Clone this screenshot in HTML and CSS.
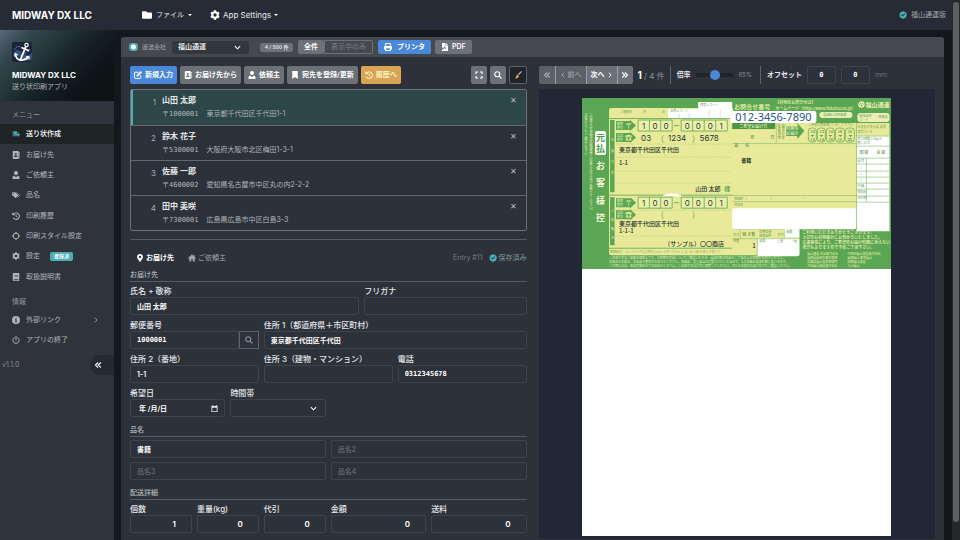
FILE: index.html
```html
<!DOCTYPE html>
<html lang="ja">
<head>
<meta charset="utf-8">
<meta name="viewport" content="width=device-width, initial-scale=1">
<title>MIDWAY DX LLC</title>
<link rel="stylesheet" href="styles.css">
</head>
<body>
<svg class="sprite" aria-hidden="true">
  <symbol id="folder" viewBox="0 0 512 512"><path d="M464 128H272l-64-64H48C21.5 64 0 85.500 0 112v288c0 26.500 21.500 48 48 48h416c26.500 0 48-21.500 48-48V176c0-26.500-21.500-48-48-48z"/></symbol>
  <symbol id="gear" viewBox="0 0 16 16"><path fill-rule="evenodd" d="M6.300.5h3.400l.5 2 1.400.8 2-.6 1.700 2.900-1.500 1.500v1.800l1.500 1.500-1.700 2.900-2-.6-1.400.8-.5 2H6.300l-.5-2-1.400-.8-2 .6L.7 10.400l1.500-1.500V7.100L.7 5.600l1.700-2.900 2 .6 1.400-.8zM8 5.300a2.700 2.700 0 1 0 0 5.400 2.700 2.700 0 0 0 0-5.400z"/></symbol>
  <symbol id="check" viewBox="0 0 16 16"><path fill-rule="evenodd" d="M8 0l2 1.500 2.500-.1.900 2.300 2.100 1.400L15 7.600l.8 2.400-2 1.600-.6 2.400-2.500.2L8.600 16 6.500 14.700 4 14.600l-.9-2.300L1 10.900l.5-2.500L.5 6l2-1.600L3 2l2.600-.2zM12.300 5.800l-1.200-1.200-4 4-1.800-1.800-1.200 1.200 3 3z"/></symbol>
  <symbol id="truck" viewBox="0 0 20 16"><path fill-rule="evenodd" d="M3 1h9v2.500h3l4 4V12h-1.500a2.500 2.500 0 0 1-5 0h-4a2.500 2.500 0 0 1-5 0H2V9.500h5V8H0V6.500h6V5H1V3.500h2zM13 5v3h4.200l-3-3zM5 12a1 1 0 1 0 2 0 1 1 0 0 0-2 0zm9 0a1 1 0 1 0 2 0 1 1 0 0 0-2 0z"/></symbol>
  <symbol id="book" viewBox="0 0 16 16"><path fill-rule="evenodd" d="M3 0h9q1.500 0 1.500 1.500v13Q13.500 16 12 16H3q-1.500 0-1.500-1.500v-13Q1.500 0 3 0zm4.500 4a2 2 0 1 0 0 4 2 2 0 0 0 0-4zM4 12h7c0-2-1-3-2.500-3h-2C5 9 4 10 4 12z"/><path d="M14 2h1.500v3H14zM14 6.500h1.500v3H14zM14 11h1.500v3H14z"/></symbol>
  <symbol id="user" viewBox="0 0 16 16"><circle cx="8" cy="4" r="4"/><path d="M1 16v-3q0-3.500 3.500-4L8 12.500 11.500 9Q15 9.500 15 13v3z"/></symbol>
  <symbol id="tags" viewBox="0 0 20 16"><path fill-rule="evenodd" d="M0 2.500Q0 1 1.500 1H8l7 7q1 1 0 2l-5 5q-1 1-2 0L0 8zM3.500 3a1.500 1.500 0 1 0 0 3 1.500 1.500 0 0 0 0-3z"/><path d="M10 1h1.500L19 8q1 1 0 2l-5 5q-.8.800-1.600.4L17 10.500q1.200-1.500 0-2.800z"/></symbol>
  <symbol id="history" viewBox="0 0 16 16"><path d="M1 1l2 2a7.500 7.500 0 1 1-1 9.300l1.800-1.200A5.300 5.300 0 1 0 4.500 4.500L6.500 6.500H.5V1z"/><path d="M7.300 4.500H9v3.300l2.400 1.800-1 1.400-3.100-2.300z"/></symbol>
  <symbol id="target" viewBox="0 0 16 16"><path fill-rule="evenodd" d="M7 0h2v1.600A6.500 6.500 0 0 1 14.400 7H16v2h-1.600A6.500 6.500 0 0 1 9 14.400V16H7v-1.600A6.500 6.500 0 0 1 1.600 9H0V7h1.600A6.500 6.500 0 0 1 7 1.600zM8 3.500a4.500 4.500 0 1 0 0 9 4.500 4.500 0 0 0 0-9z"/></symbol>
  <symbol id="manual" viewBox="0 0 16 16"><path fill-rule="evenodd" d="M4 0h10.500v12l-1 .7V14.500h1V16H4q-2.500 0-2.500-2.500v-11Q1.500 0 4 0zm1 4v1.200h7V4zm0 2.500v1.200h7V6.500zM4.500 12.500q-1 0-1 1t1 1H12v-2z"/></symbol>
  <symbol id="info" viewBox="0 0 16 16"><path fill-rule="evenodd" d="M8 0a8 8 0 1 0 0 16A8 8 0 0 0 8 0zM7 3h2.200v2.200H7zM6 6.500h3.200V11h1v1.500H6V11h1V8H6z"/></symbol>
  <symbol id="power" viewBox="0 0 16 16"><path fill="none" stroke="currentColor" stroke-width="2" stroke-linecap="round" d="M8 1v7M4.300 3.200a6.300 6.300 0 1 0 7.400 0"/></symbol>
  <symbol id="chev" viewBox="0 0 16 16"><path fill="none" stroke="currentColor" stroke-width="2" d="M5 2l6 6-6 6"/></symbol>
  <symbol id="left" viewBox="0 0 16 16"><path fill="none" stroke="currentColor" stroke-width="2.500" d="M11 2L5 8l6 6"/></symbol>
  <symbol id="right" viewBox="0 0 16 16"><path fill="none" stroke="currentColor" stroke-width="2.500" d="M5 2l6 6-6 6"/></symbol>
  <symbol id="dleft" viewBox="0 0 16 16"><path fill="none" stroke="currentColor" stroke-width="2.200" d="M8 3L3 8l5 5M13.500 3l-5 5 5 5"/></symbol>
  <symbol id="dright" viewBox="0 0 16 16"><path fill="none" stroke="currentColor" stroke-width="2.200" d="M8 3l5 5-5 5M2.500 3l5 5-5 5"/></symbol>
  <symbol id="edit" viewBox="0 0 16 16"><path fill="none" stroke="currentColor" stroke-width="2" d="M9 2.500H2.500Q1 2.500 1 4v9.500Q1 15 2.500 15H12q1.500 0 1.500-1.500V9"/><path d="M13 0l3 3-7.500 7.500L5 11.500 5.500 8z"/></symbol>
  <symbol id="mark" viewBox="0 0 16 16"><path d="M2.500 0h11v16L8 12l-5.500 4z"/></symbol>
  <symbol id="printer" viewBox="0 0 16 16"><path fill-rule="evenodd" d="M3 0h9l1.500 1.500V6H15l1 1v6h-2.500v3h-11v-3H0V7l1-1h1.500V0zm1.500 2v4h7V2.500L11 2zm0 8.500V14h7v-3.500z"/></symbol>
  <symbol id="file" viewBox="0 0 16 16"><path fill-rule="evenodd" d="M2 0h7v5h5v11H2v-3l5-1v-2L2 9zm5 6l-2 6 6-1-2-2z"/><path d="M10 0l4 4h-4z"/></symbol>
  <symbol id="expand" viewBox="0 0 16 16"><path fill="none" stroke="currentColor" stroke-width="2.400" d="M2 6V2h4M10 2h4v4M14 10v4h-4M6 14H2v-4"/></symbol>
  <symbol id="search" viewBox="0 0 16 16"><path fill="none" stroke="currentColor" stroke-width="2.200" d="M11.500 6.500a5 5 0 1 1-10 0 5 5 0 0 1 10 0zM10 10l5 5"/></symbol>
  <symbol id="broom" viewBox="0 0 16 16"><path fill="#b9bdc1" d="M14.500 0L16 1.500l-6 6.500-2-2z"/><path fill="#d9a454" d="M6.500 6.500l3.500 3.500q-1 4-5 5l-3-.5q3-3 3-5.500z"/></symbol>
  <symbol id="pin" viewBox="0 0 16 16"><path fill-rule="evenodd" d="M8 0a5.800 5.800 0 0 0-5.800 5.800C2.200 9.500 5.500 12 8 16c2.500-4 5.800-6.500 5.800-10.200A5.800 5.800 0 0 0 8 0zm0 3.500a2.300 2.300 0 1 0 0 4.600 2.300 2.300 0 0 0 0-4.600z"/></symbol>
  <symbol id="home" viewBox="0 0 16 16"><path d="M8 .5L0 8l1.200 1.300L2.500 8.200V15H6.500v-4.500h3V15h4V8.200l1.300 1.100L16 8l-2.500-2.300V2h-2v1.800z"/></symbol>
  <symbol id="cal" viewBox="0 0 16 16"><path fill-rule="evenodd" d="M3 0h2v2h6V0h2v2h2v14H1V2h2zm0 6v8h10V6z"/></symbol>
</svg>

<header class="topbar">
  <a class="brand" href="#">MIDWAY DX LLC</a>
  <nav class="topnav">
    <button class="topnav-item"><svg class="icon icon-lg"><use href="#folder"/></svg>ファイル<span class="caret"></span></button>
    <button class="topnav-item"><svg class="icon icon-lg"><use href="#gear"/></svg>App Settings<span class="caret"></span></button>
  </nav>
  <div class="edition"><svg class="icon teal"><use href="#check"/></svg>福山通運版</div>
</header>

<div class="shell">
  <aside class="sidebar">
    <div class="identity">
      <svg class="logo" viewBox="0 0 20 20">
        <rect width="20" height="20" rx="2" fill="#1c2438"/>
        <path d="M1 11Q4 6 8 9T15 13T20 10V18Q14 20 9 16T1 15z" fill="#34507e"/>
        <path d="M2 8Q5 3 9 5M11 12q4-1 7-5" stroke="#4c6a98" fill="none"/>
        <g fill="none" stroke="#fff" stroke-linecap="round">
          <circle cx="14.500" cy="3" r="1.700" stroke-width="1.200"/>
          <path d="M13.700 4.800L8.500 17.500" stroke-width="1.800"/>
          <path d="M10 5.800l6.500 2.800" stroke-width="1.600"/>
          <path d="M3.500 12Q4 17.500 8.500 18T16.500 15" stroke-width="1.800"/>
          <path d="M2.800 14l.7-2.500 2.200 1.400M14.300 14.600l2.700-.2v2.600" stroke-width="1"/>
        </g>
      </svg>
      <strong>MIDWAY DX LLC</strong>
      <span>送り状印刷アプリ</span>
    </div>
    <h2 class="nav-title">メニュー</h2>
    <ul class="nav nav-main">
      <li><a class="active" href="#"><svg class="icon teal"><use href="#truck"/></svg>送り状作成</a></li>
      <li><a href="#"><svg class="icon"><use href="#book"/></svg>お届け先</a></li>
      <li><a href="#"><svg class="icon"><use href="#user"/></svg>ご依頼主</a></li>
      <li><a href="#"><svg class="icon"><use href="#tags"/></svg>品名</a></li>
      <li><a href="#"><svg class="icon"><use href="#history"/></svg>印刷履歴</a></li>
      <li><a href="#"><svg class="icon"><use href="#target"/></svg>印刷スタイル設定</a></li>
      <li><a href="#"><svg class="icon"><use href="#gear"/></svg>設定<span class="tag">登録済</span></a></li>
      <li><a href="#"><svg class="icon"><use href="#manual"/></svg>取扱説明書</a></li>
    </ul>
    <h2 class="nav-title nav-title-info">情報</h2>
    <ul class="nav">
      <li><a href="#"><svg class="icon"><use href="#info"/></svg>外部リンク<svg class="icon icon-sm more"><use href="#chev"/></svg></a></li>
      <li><a href="#"><svg class="icon"><use href="#power"/></svg>アプリの終了</a></li>
    </ul>
    <div class="side-foot"><span>v1.1.0</span><button class="collapse" aria-label="メニューを閉じる"><svg class="icon"><use href="#dleft"/></svg></button></div>
  </aside>

  <main class="panel">
    <div class="carrier-bar">
      <span class="status"></span>
      <label class="muted" for="carrier">運送会社</label>
      <select id="carrier" class="carrier"><option>福山通運</option></select>
      <span class="count">4 / 500 件</span>
      <div class="group filter"><button class="btn">全件</button><button class="btn btn-outline">表示中のみ</button></div>
      <button class="btn btn-blue btn-print"><svg class="icon"><use href="#printer"/></svg>プリンタ</button>
      <button class="btn"><svg class="icon"><use href="#file"/></svg>PDF</button>
    </div>

    <div class="columns">
      <section class="editor">
        <div class="actions">
          <button class="btn btn-blue"><svg class="icon"><use href="#edit"/></svg>新規入力</button>
          <button class="btn"><svg class="icon"><use href="#book"/></svg>お届け先から</button>
          <button class="btn"><svg class="icon"><use href="#user"/></svg>依頼主</button>
          <button class="btn"><svg class="icon"><use href="#mark"/></svg>宛先を登録/更新</button>
          <button class="btn btn-gold"><svg class="icon"><use href="#history"/></svg>履歴へ</button>
          <span class="spacer"></span>
          <button class="btn btn-icon" aria-label="拡大"><svg class="icon"><use href="#expand"/></svg></button>
          <button class="btn btn-icon" aria-label="検索"><svg class="icon"><use href="#search"/></svg></button>
          <button class="btn btn-icon btn-dark" aria-label="クリア"><svg class="icon"><use href="#broom"/></svg></button>
        </div>

        <ol class="entries">
          <li class="current"><span class="num">1</span><div><b>山田 太郎</b><p><span class="zip">〒1000001</span>東京都千代田区千代田1-1</p></div><button class="remove" aria-label="削除">✕</button></li>
          <li><span class="num">2</span><div><b>鈴木 花子</b><p><span class="zip">〒5300001</span>大阪府大阪市北区梅田1-3-1</p></div><button class="remove" aria-label="削除">✕</button></li>
          <li><span class="num">3</span><div><b>佐藤 一郎</b><p><span class="zip">〒4600002</span>愛知県名古屋市中区丸の内2-2-2</p></div><button class="remove" aria-label="削除">✕</button></li>
          <li><span class="num">4</span><div><b>田中 美咲</b><p><span class="zip">〒7300001</span>広島県広島市中区白島3-3</p></div><button class="remove" aria-label="削除">✕</button></li>
        </ol>

        <form class="form">
          <div class="tabs">
            <button type="button" class="tab tab-on"><svg class="icon"><use href="#pin"/></svg>お届け先</button>
            <button type="button" class="tab"><svg class="icon"><use href="#home"/></svg>ご依頼主</button>
            <span class="spacer"></span>
            <span class="entry-id">Entry #11</span>
            <span class="saved"><svg class="icon teal"><use href="#check"/></svg>保存済み</span>
          </div>

          <h3 class="section">お届け先</h3>
          <div class="fields">
            <div class="field c7"><label for="name">氏名 + 敬称</label><input id="name" value="山田 太郎"></div>
            <div class="field c5"><label for="kana">フリガナ</label><input id="kana"></div>
            <div class="field c4"><label for="zip">郵便番号</label><div class="addon"><input id="zip" class="mono" value="1000001"><button type="button" aria-label="住所検索"><svg class="icon"><use href="#search"/></svg></button></div></div>
            <div class="field c8"><label for="a1">住所 1（都道府県＋市区町村）</label><input id="a1" value="東京都千代田区千代田"></div>
            <div class="field c4"><label for="a2">住所 2（番地）</label><input id="a2" value="1-1"></div>
            <div class="field c4"><label for="a3">住所 3（建物・マンション）</label><input id="a3"></div>
            <div class="field c4"><label for="tel">電話</label><input id="tel" class="mono" value="0312345678"></div>
            <div class="field c3"><label for="date">希望日</label><div class="date"><input id="date" value="年 /月/日"><svg class="icon"><use href="#cal"/></svg></div></div>
            <div class="field c3"><label for="time">時間帯</label><select id="time"><option></option></select></div>
          </div>

          <h3 class="section section-next">品名</h3>
          <div class="fields">
            <input class="c6" aria-label="品名1" value="書籍">
            <input class="c6" aria-label="品名2" placeholder="品名2">
            <input class="c6" aria-label="品名3" placeholder="品名3">
            <input class="c6" aria-label="品名4" placeholder="品名4">
          </div>

          <h3 class="section section-next">配送詳細</h3>
          <div class="fields numbers">
            <div class="field c2"><label for="qty">個数</label><input id="qty" value="1"></div>
            <div class="field c2"><label for="kg">重量(kg)</label><input id="kg" value="0"></div>
            <div class="field c2"><label for="cod">代引</label><input id="cod" value="0"></div>
            <div class="field c3"><label for="sum">金額</label><input id="sum" value="0"></div>
            <div class="field c3"><label for="fee">送料</label><input id="fee" value="0"></div>
          </div>
        </form>
      </section>

      <section class="viewer">
        <div class="actions viewer-bar">
          <div class="group pager">
            <button class="btn dim" aria-label="最初"><svg class="icon"><use href="#dleft"/></svg></button>
            <button class="btn dim"><svg class="icon icon-sm"><use href="#left"/></svg>前へ</button>
            <button class="btn">次へ<svg class="icon icon-sm"><use href="#right"/></svg></button>
            <button class="btn" aria-label="最後"><svg class="icon"><use href="#dright"/></svg></button>
          </div>
          <span class="page"><b>1</b> / 4 件</span>
          <label class="ruled" for="zoom">倍率</label>
          <input id="zoom" class="zoom" type="range" min="30" max="100" value="65">
          <span class="percent">65%</span>
          <label class="ruled" for="ox">オフセット</label>
          <input id="ox" class="offset mono" value="0">
          <input class="offset mono" aria-label="縦オフセット" value="0">
          <span class="unit">mm</span>
        </div>
        <div class="stage">
          <div class="paper">
            <svg class="slip" viewBox="0 0 309 171">
              <defs>
                <g id="arrow"><path d="M0 1h14V0l6 5.500L14 11v-1H0z" fill="#5aa654"/></g>
                <g id="boxes" fill="#edefa9" stroke="#5aa654" stroke-width=".8"><path d="M0 0h34v11H0zM11.300 0v11M22.600 0v11M43 0h46v11H43zM54.500 0v11M66 0v11M77.500 0v11M36 5.500h5"/></g>
              </defs>
              <rect width="309" height="171" fill="#5aa654"/>

              <g class="slip-tiny white">
                <text class="upright" x="9" y="15">この控えはお荷物の追跡調査等に必要ですので大切に保管してください。</text>
                <text class="upright" x="4" y="15">お届けについてご確認ください</text>
              </g>
              <rect x="13" y="33" width="11" height="24" rx="2" fill="#fff"/>
              <g class="slip-side">
                <text x="18.500" y="43" class="green">元</text><text x="18.500" y="54" class="green">払</text>
                <text x="18.500" y="71">お</text><text x="18.500" y="88">客</text><text x="18.500" y="106">様</text><text x="18.500" y="123">控</text>
              </g>

              <rect x="27" y="10" width="124" height="147" rx="2" fill="#e8ea99"/>
              <path d="M86 11h30V4h34v17H86z" fill="#fff"/>
              <path d="M127 12v8M138 12v8M97 15v5M107 15v5" stroke="#a9cfa0" stroke-width=".5"/>
              <path d="M27 20.500h124M27 97h124M27 150h124" stroke="#5aa654" stroke-width=".8"/>
              <path d="M81 97q9-4 18 0v1H81z" fill="#fff"/>
              <path d="M34 59h115M34 73h115M34 85h115M34 46h115M34 112h115M34 138h115" stroke="#a8ca78" stroke-width=".5" stroke-dasharray="2 1"/>
              <path d="M28 22h4.500v72H28zM28 99h4.500v48H28z" fill="#5aa654"/>
              <g class="slip-tiny"><text x="38" y="15">ご依頼日</text><text x="61" y="15">月</text><text x="80" y="15">日</text><text x="88" y="14">出荷人コード</text><text x="118" y="8">荷受人コード</text></g>
              <g class="slip-tiny white">
                <text x="29" y="43">お</text><text x="29" y="54">届</text><text x="29" y="65">け</text><text x="29" y="76">先</text>
                <text x="29" y="114">ご</text><text x="29" y="123">依</text><text x="29" y="132">頼</text><text x="29" y="141">主</text>
              </g>
              <use href="#arrow" x="34" y="22"/><use href="#arrow" x="34" y="34"/><use href="#arrow" x="34" y="99"/><use href="#arrow" x="34" y="111"/>
              <g class="slip-tiny white">
                <text x="35" y="27">郵便</text><text x="35" y="31">番号</text><text x="35" y="39">電話</text><text x="35" y="43">番号</text>
                <text x="35" y="104">郵便</text><text x="35" y="108">番号</text><text x="35" y="116">電話</text><text x="35" y="120">番号</text>
              </g>
              <g class="slip-mark"><text x="43" y="30">〒</text><text x="43" y="42">☎</text><text x="43" y="107">〒</text><text x="43" y="119">☎</text></g>
              <use href="#boxes" x="56" y="22"/><use href="#boxes" x="56" y="99"/>
              <g class="slip-digit">
                <text x="61.500" y="30.500">1</text><text x="73" y="30.500">0</text><text x="84" y="30.500">0</text><text x="105" y="30.500">0</text><text x="116" y="30.500">0</text><text x="128" y="30.500">0</text><text x="139" y="30.500">1</text>
                <text x="61.500" y="107.500">1</text><text x="73" y="107.500">0</text><text x="84" y="107.500">0</text><text x="105" y="107.500">0</text><text x="116" y="107.500">0</text><text x="128" y="107.500">0</text><text x="139" y="107.500">1</text>
                <text x="64" y="43">03</text><text x="95" y="43">1234</text><text x="127" y="43">5678</text>
              </g>
              <g class="slip-paren"><text x="79" y="43">(</text><text x="110" y="43">)</text><text x="79" y="119">(</text><text x="110" y="119">)</text></g>
              <g class="slip-text">
                <text x="37" y="54">東京都千代田区千代田</text><text x="37" y="67">1-1</text>
                <text x="113" y="93">山田 太郎</text><text x="142" y="93" class="green">様</text>
                <text x="37" y="128">東京都千代田区千代田</text><text x="37" y="135">1-1-1</text>
                <text x="82" y="148">（サンプル）〇〇商店</text>
              </g>
              <g class="slip-tiny"><text x="28" y="155">取扱区分｜1.ハイバッグ 2.JTP 3.ジェットサーブメイト (2・6・10) 4.セルフタイプ</text></g>
              <g class="slip-tiny white">
                <text x="27" y="161">この送り状はご依頼主様控えです。お荷物の内容についてご確認いただき、運送約款の内容をご了承の上お荷物をお預けください。</text>
                <text x="27" y="165">お問合せの際は、お問合せ番号をお知らせください。高価品、貴重品はお引受けいたしかねます。なお詳細は運送約款に基づきます。</text>
                <text x="27" y="169">ご不明な点は、担当営業所までお問合せください。この送り状は大切に保管してください。またその他のお届け先でもご確認ください。</text>
              </g>

              <text x="152" y="11" class="slip-title">お問合せ番号</text>
              <g class="slip-small cream"><text x="193" y="6">【荷物のお問合せは】</text><text x="193" y="12">ホームページ（http://www.fukutsu.co.jp）</text></g>
              <rect x="148" y="13" width="86" height="12" rx="2" fill="#fff"/>
              <text x="153" y="23" class="slip-number">012-3456-7890</text>
              <rect x="237" y="14" width="33" height="6" rx="3" fill="#e9efb4"/><text x="241" y="18" class="slip-tiny green">運送料120円未満</text>
              <circle cx="279" cy="6.500" r="2.600" fill="none" stroke="#f5f6b4" stroke-width="1.200"/><path d="M277 9l2-4 2 4" stroke="#f5f6b4" fill="none"/>
              <text x="283" y="9" class="slip-logo">福山通運</text>
              <rect x="275" y="15" width="32" height="9" rx="3" fill="#e9efb4"/>
              <g class="slip-tiny"><text x="277" y="19">総括店所</text><text x="277" y="22.500">コード</text><text x="296" y="20">取扱店</text></g>

              <rect x="150" y="25" width="124" height="87" fill="#e8ea99"/>
              <path d="M274 48h33v85h-33z" fill="#fff"/><rect x="150" y="110" width="124" height="21" rx="2" fill="#fff"/>
              <rect x="274" y="38" width="33" height="10" fill="#fff"/><rect x="274" y="25" width="33" height="13" fill="#e8ea99"/>
              <rect x="150" y="25" width="43" height="6" fill="#4b9547"/><text x="157" y="30" class="slip-small white">ご希望お届け日</text>
              <path d="M204 28h11v-3l7 8-7 8v-3h-11z" fill="#5aa654"/>
              <g class="slip-small"><text x="168" y="41">月</text><text x="188" y="41">日</text><text x="152" y="49">品</text><text x="163" y="49">名</text></g>
              <g class="slip-small white"><text x="204" y="32">時間帯</text><text x="204" y="37">お届け</text></g>
              <g class="slip-tiny"><text class="upright" x="197" y="26">配達希望時</text><text class="upright" x="201" y="26">間帯の指定</text><text x="226" y="28">ご希望の時間帯に〇をして下さい</text></g>
              <g fill="none" stroke="#5aa654" stroke-width=".7"><rect x="226" y="30" width="8" height="14" rx="3"/><rect x="235" y="30" width="8" height="14" rx="3"/><rect x="244" y="30" width="8" height="14" rx="3"/><rect x="253" y="30" width="9" height="14" rx="3"/><rect x="263" y="30" width="9" height="14" rx="3"/></g>
              <g class="slip-small"><text x="228" y="35">10</text><text x="237" y="35">12</text><text x="246" y="35">14</text><text x="255" y="35">16</text><text x="265" y="35">18</text><text x="228" y="43">12</text><text x="237" y="43">14</text><text x="246" y="43">16</text><text x="255" y="43">18</text><text x="265" y="43">20</text></g>
              <path d="M228 37h4l-2 2zM237 37h4l-2 2zM246 37h4l-2 2zM256 37h4l-2 2zM266 37h4l-2 2z" fill="#5aa654"/>
              <path d="M150 45.500h124M150 97.500h124M150 103.500h124M194 25v20M274 48h33M274 60h33M274 38h33M274 66h33M274 73h33M274 79h33M274 85h33M274 91h33M274 98h33M274 104h33M284 60v44M274 25v107" stroke="#7db968" stroke-width=".6" fill="none"/>
              <text x="159" y="64" class="slip-small dark">書籍</text>
              <g class="slip-tiny"><text x="152" y="101.500">保険額 （</text><text x="188" y="101.500">）</text><text x="220" y="101.500">―</text><text x="152" y="108">荷送名</text>
                <text x="275" y="64">運 賃</text><text x="275" y="71">（ ）</text><text x="275" y="77">（ ）</text><text x="275" y="83">（ ）</text><text x="275" y="89">中 継</text><text x="275" y="95">保険料</text><text x="275" y="101">合計額</text>
                <text x="275" y="30">お支払方法 元着 運賃</text><text x="275" y="35">様式コース</text><text x="275" y="42">荷 口個数 2.5kg/4</text><text x="275" y="46">数 1 5 8 3</text></g>
              <g class="slip-small"><text x="277" y="56">現 収</text><text x="294" y="56">未 収</text></g>
              <path d="M150 131h67v26h-67z" fill="#e8ea99"/><path d="M202 131h15v8h-15zM175 140h42v16q0 2-2 2h-40z" fill="#fff"/>
              <path d="M150 140.500h67M158 132v8M175 140v17M202 132v8" stroke="#7db968" stroke-width=".6"/>
              <g class="slip-small"><text x="160" y="138">個 才数</text></g>
              <g class="slip-tiny"><text x="151" y="138">貼付</text><text x="177" y="135">損害賠償</text><text x="177" y="139">制限金額</text><text x="195" y="138">万円</text><text x="204" y="135">端数</text><text x="151" y="144">個数</text><text x="177" y="144">容積</text><text x="195" y="144">重量</text><text x="211" y="144">kg</text></g>
              <g class="slip-text"><text x="170" y="150">1</text></g>
              <g class="slip-note"><text x="220" y="136">ご利用いただきありがとうございます。</text><text x="220" y="141">上記のお荷物確かにお預かりいたしました。</text><text x="220" y="146">交通事情により、ご希望のお届け時間に添えない</text><text x="220" y="151">場合もありますので予めご了承下さい。</text></g>
              <g class="slip-tiny cream"><text x="225" y="157">福山通運 本社株式会社</text><text x="225" y="161">福岡県福岡市東区箱崎</text><text x="225" y="165">広島県福山市東深津町</text><text x="225" y="169">中国福山通運株式会社</text><text x="265" y="157">中四国福山通運株式会社</text><text x="265" y="161">福岡福山 東京福山</text><text x="265" y="165">関西福山通運</text><text x="265" y="169">九州福山</text></g>
            </svg>
          </div>
        </div>
      </section>
    </div>
  </main>
  <div class="scroll"><span></span></div>
</div>
</body>
</html>
```

FILE: styles.css
```css
* { box-sizing: border-box; }

:root {
  --bg: #12181b;
  --panel: #2d323a;
  --line: #555c63;
  --field: #3e444c;
  --grey: #6b7177;
  --blue: #4a88da;
  --teal: #4cadb3;
  --text: #e4e7ea;
  --muted: #a3a9af;
}

body {
  margin: 0;
  min-height: 100vh;
  display: flex;
  flex-direction: column;
  background: var(--bg);
  color: var(--text);
  font: 7px/12px Inter, "Noto Sans CJK JP", sans-serif;
}

button, input, select { font: inherit; color: inherit; }
button { padding: 0; border: 0; background: none; cursor: pointer; }
a { color: inherit; text-decoration: none; }
ul, ol, h2, h3, p { margin: 0; padding: 0; list-style: none; }
.sprite { position: absolute; width: 0; height: 0; }
.icon { width: 8px; height: 8px; flex: none; fill: currentColor; }
.icon-lg { width: 10px; height: 10px; }
.icon-sm { width: 6px; height: 6px; }
.teal { color: var(--teal); }
.spacer { flex: 1; }

.topbar {
  height: 30px;
  display: flex;
  align-items: center;
  padding: 0 14px 0 12px;
  background: #262b36;
}
.brand { width: 130px; font-size: 10px; font-weight: 700; color: #fff; white-space: nowrap; }
.topnav { display: flex; gap: 18px; flex: 1; }
.topnav-item { display: flex; align-items: center; gap: 4px; font-size: 7px; }
.topnav-item:last-child { font-size: 8px; gap: 3px; }
.topnav-item .icon { color: #fff; }
.caret { border: 2px solid transparent; border-top-color: #fff; border-bottom: 0; }
.edition { display: flex; align-items: center; gap: 4px; color: var(--muted); }

.shell { flex: 1; display: flex; }

.sidebar { width: 114px; flex: none; background: #2f343c; color: #b1b6bb; }
.identity {
  height: 71px;
  padding: 12px 12px 0;
  display: flex;
  flex-direction: column;
  align-items: flex-start;
  background: linear-gradient(135deg, #59687a 0, #35474f 18%, #25393c 34%, #162124 54%, #0d1215 80%);
}
.logo { width: 20px; height: 20px; margin-bottom: 7px; }
.identity strong { font-size: 8px; font-weight: 700; color: #fff; white-space: nowrap; }
.nav-title { padding: 8px 12px 3px; font-size: 7px; font-weight: 400; color: #92989e; }
.nav-title-info { padding: 9px 12px 2px; }
.nav { display: grid; grid-auto-rows: 20px; }
.nav-main { height: 163px; grid-auto-rows: 1fr; }
.nav a { height: 100%; display: flex; align-items: center; gap: 6px; padding: 0 12px; }
.nav .active { background: #1f2427; color: #fff; font-weight: 500; }
.tag { margin-left: 4px; padding: 0 4px; border-radius: 2px; background: var(--teal); color: #fff; font-size: 5px; line-height: 9px; font-weight: 700; }
.more { margin: 0 3px 0 auto; }
.side-foot { display: flex; justify-content: space-between; align-items: center; margin-top: 5px; padding-left: 2px; color: #878e95; }
.collapse { width: 24px; height: 20px; display: flex; align-items: center; justify-content: center; padding-right: 8px; border-radius: 10px 0 0 10px; background: #252a32; color: #fff; }

.panel { flex: 1; min-width: 0; margin: 7px 8px 0 7px; border-radius: 3px 3px 0 0; background: var(--panel); }
.scroll { width: 8px; background: #24282b; padding: 0 1px; margin-top: -30px; }
.scroll span { display: block; height: 520px; margin-top: 2px; border-radius: 3px; background: #5c6063; }

.carrier-bar {
  height: 20px;
  display: flex;
  align-items: center;
  padding: 0 8px;
  border-radius: 3px 3px 0 0;
  background: #45494d;
}
.status { width: 9px; height: 8px; margin-right: 4px; border-radius: 3px; background: radial-gradient(circle, #fff 2px, var(--teal) 3px); }
.muted { color: var(--muted); font-size: 6px; margin-right: 6px; }

select {
  appearance: none;
  border: 1px solid var(--field);
  border-radius: 2px;
  background: var(--panel) url("data:image/svg+xml,%3Csvg xmlns='http://www.w3.org/2000/svg' viewBox='0 0 16 16'%3E%3Cpath fill='none' stroke='%23fff' stroke-width='2.500' d='M2 5l6 6 6-6'/%3E%3C/svg%3E") no-repeat right 8px center / 7px;
  padding: 0 6px;
}
.carrier { width: 77px; height: 13px; margin-right: 11px; border: 0; background-color: #32373b; font-weight: 700; line-height: 12px; }
.count { width: 33px; margin-right: 5px; border-radius: 2px; background: var(--grey); font-size: 5px; line-height: 9px; font-weight: 600; text-align: center; white-space: nowrap; }

.btn {
  height: 18px;
  display: flex;
  align-items: center;
  justify-content: center;
  gap: 3px;
  padding: 0 4px;
  border-radius: 2px;
  background: var(--grey);
  color: #fff;
  font-weight: 600;
  white-space: nowrap;
}
.btn-blue { background: var(--blue); }
.btn-gold { background: #d9a454; color: #fbf3c4; }
.btn-outline { border: 1px solid var(--grey); border-radius: 0 2px 2px 0; background: none; color: #7b8187; font-weight: 400; }
.btn-icon { width: 16px; padding: 0; }
.btn-dark { width: 18px; border: 1px solid #5d6368; background: #1f2429; }
.carrier-bar .btn { height: 14px; padding: 0 6px; }
.carrier-bar .btn-print { margin: 0 4px 0 5px; gap: 5px; }
.group { display: flex; }

.columns { display: grid; grid-template-columns: 1fr 1fr; gap: 12px; padding: 9px 9px 0; }
.actions { display: flex; align-items: center; gap: 3px; height: 18px; }

.entries {
  height: 142px;
  margin-top: 5px;
  display: grid;
  grid-auto-rows: 1fr;
  border: 1px solid #6c7278;
  border-radius: 2px;
}
.entries li { display: flex; padding: 4px 9px 0 0; }
.entries li + li { border-top: 1px solid #60676d; }
.entries .current { border-left: 2px solid var(--teal); background: #2d4648; }
.entries .current .num { width: 23px; }
.num { width: 25px; margin-right: 6px; padding-top: 2px; text-align: right; color: var(--muted); font-size: 8px; }
.entries div { flex: 1; }
.entries b { display: block; font-size: 8px; font-weight: 700; }
.entries p { margin-top: 2px; color: #b0b5ba; display: flex; gap: 8px; }
.zip { font-family: "DejaVu Sans Mono", "Noto Sans CJK JP", monospace; }
.remove { align-self: flex-start; color: #b8bcc1; font-size: 8px; }

.form { margin-top: 8px; border-top: 1px solid var(--line); padding-bottom: 6px; }
.tabs { display: flex; align-items: center; height: 29px; padding: 7px 0 0 6px; }
.tab { display: flex; align-items: center; gap: 2px; margin-right: 14px; color: #9da3a9; }
.tab-on { color: #fff; font-weight: 700; }
.entry-id { color: #737a81; margin-right: 6px; }
.saved { display: flex; gap: 2px; align-items: center; color: #7f979c; }
.section { height: 13px; border-bottom: 1px solid var(--line); font-size: 7px; line-height: 12px; font-weight: 500; color: #b2b7bc; }
.section-next { margin-top: 7px; }
.fields { display: grid; grid-template-columns: repeat(12, 1fr); gap: 4px 5px; margin-top: 3px; }
.field { display: flex; flex-direction: column; min-width: 0; }
.field label { font-size: 8px; line-height: 12px; font-weight: 500; white-space: nowrap; }
.c2 { grid-column: span 2; }
.c3 { grid-column: span 3; }
.c4 { grid-column: span 4; }
.c5 { grid-column: span 5; }
.c6 { grid-column: span 6; }
.c7 { grid-column: span 7; }
.c8 { grid-column: span 8; }
.form input, .form select { width: 100%; min-width: 0; height: 18px; }
.form input, .offset {
  padding: 0 6px;
  border: 1px solid var(--field);
  border-radius: 2px;
  background: transparent;
  color: #fff;
  font-weight: 600;
}
.mono { font-family: "DejaVu Sans Mono", monospace; }
.form input::placeholder { color: #71777e; font-weight: 400; opacity: 1; }
.addon { display: flex; }
.addon input { flex: 1; border-radius: 2px 0 0 2px; }
.addon button { width: 20px; border: 1px solid #5c6269; color: #8b9197; display: grid; place-items: center; }
.date { display: flex; align-items: center; border: 1px solid var(--field); border-radius: 2px; padding-right: 6px; height: 18px; }
.date input { border: 0; padding-left: 8px; }
.date .icon { width: 7px; height: 7px; }
.numbers input { text-align: right; padding-right: 15px; font-size: 8px; }

.viewer { display: flex; flex-direction: column; }
.viewer-bar { gap: 5px; }
.pager .btn { border-radius: 0; gap: 2px; }
.pager .btn:first-child { border-radius: 2px 0 0 2px; }
.pager .btn:last-child { border-radius: 0 2px 2px 0; }
.pager .btn:first-child, .pager .btn:last-child { width: 16px; }
.pager .btn + .btn { border-left: 1px solid #9aa0a5; }
.pager .dim { background: #5a6066; color: #aaafb4; font-weight: 400; }
.page { color: #8b9197; font-size: 8px; white-space: nowrap; }
.page b { color: #fff; font-size: 10px; }
.ruled { height: 18px; padding-left: 6px; border-left: 1px solid #5d646a; line-height: 18px; font-weight: 600; white-space: nowrap; }
.zoom { appearance: none; width: 38px; height: 10px; margin: 0; background: none; }
.zoom::-webkit-slider-runnable-track { height: 4px; border-radius: 2px; background: #1f2429; }
.zoom::-webkit-slider-thumb { appearance: none; width: 10px; height: 10px; margin-top: -3px; border-radius: 50%; background: var(--blue); }
.percent { color: #878e94; font-size: 6px; margin-right: 3px; }
.offset { width: 29px; height: 18px; text-align: center; }
.unit { color: #676e75; }

.stage { flex: 1; margin-top: 5px; padding: 9px 44px 2px 43px; background: #212735; }
.paper { aspect-ratio: 210 / 297; background: #fff; }
.slip { display: block; width: 100%; }
.slip text { font-family: "Noto Sans CJK JP", sans-serif; }
.slip-tiny { font-size: 3px; fill: #6f9a55; }
.slip-small { font-size: 4px; fill: #5d8f48; font-weight: 500; }
.slip-side { font-size: 9px; font-weight: 700; fill: #f4f7d0; text-anchor: middle; }
.slip-mark { font-size: 7px; fill: #e8ea99; }
.slip .slip-digit text { font-family: Inter, sans-serif; font-size: 8px; fill: #253b42; text-anchor: middle; }
.slip-paren { font-size: 8px; fill: #669a51; }
.slip-text { font-size: 6px; fill: #1e3430; font-weight: 500; }
.slip-title { font-size: 6px; fill: #f2f4b5; font-weight: 500; }
.slip-logo { font-size: 6px; fill: #f2f4b5; font-weight: 700; }
.slip-note { font-size: 4px; fill: #f2f4b5; font-weight: 500; }
.slip text.slip-number { font-family: "Noto Sans", sans-serif; font-size: 11px; fill: #265386; }
.slip .white { fill: #e4f0bf; }
.slip .cream { fill: #edf1a8; }
.slip .green { fill: #4e9a49; }
.slip .dark { fill: #233329; font-size: 5px; font-weight: 700; }
.upright { writing-mode: vertical-rl; }
```
